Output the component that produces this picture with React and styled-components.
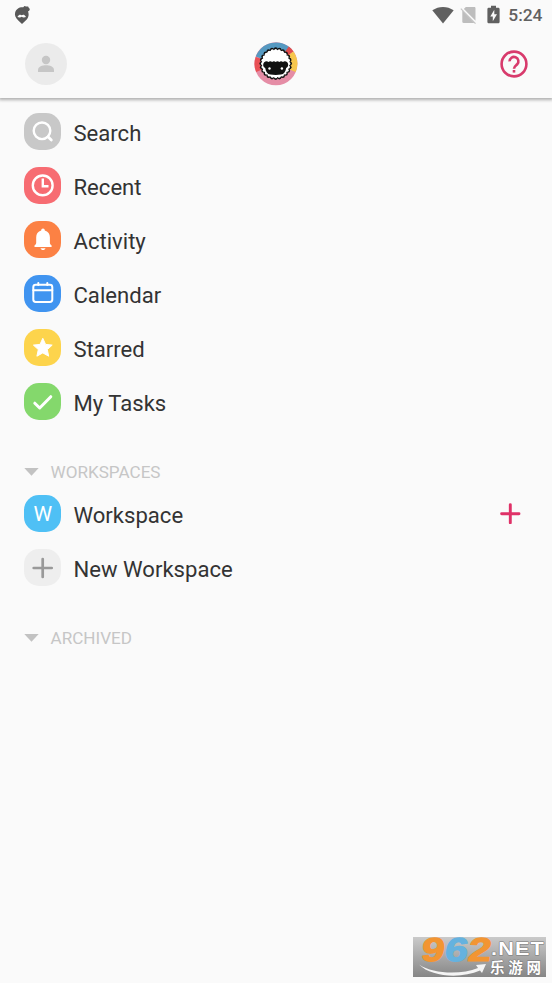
import React from "react";
import styled, { createGlobalStyle } from "styled-components";

const GlobalStyle = createGlobalStyle`
  * { box-sizing: border-box; }
  body { margin: 0; background: #fafafa; font-family: Roboto, "Noto Sans CJK SC", sans-serif; }
`;

const Screen = styled.div`
  position: relative;
  width: 552px;
  height: 983px;
  overflow: hidden;
  background: #fafafa;
  color: #333;
`;

const Top = styled.header`
  height: 98px;
  box-shadow: 0 1px 3px 1px rgba(0, 0, 0, 0.3);
`;

const StatusBar = styled.div`
  height: 30px;
  padding: 0 9.5px 0 13px;
  display: flex;
  justify-content: space-between;
  align-items: center;
`;

const StatusGroup = styled.div`
  display: flex;
  align-items: center;
`;

const StatusIcon = styled.svg`
  display: block;
  width: ${(p) => p.$w}px;
  height: 20px;
  margin-right: ${(p) => p.$gap || 0}px;
`;

const Clock = styled.span`
  font-size: 17.4px;
  line-height: 20px;
  font-weight: 500;
  color: #606060;
`;

const NavBar = styled.div`
  height: 68px;
  padding: 0 24px 0 25px;
  display: grid;
  grid-template-columns: 229px 44px 1fr;
  align-items: center;
`;

const Avatar = styled.div`
  width: 42px;
  height: 42px;
  border-radius: 50%;
  background: #ebebeb;
`;

const Glyph = styled.svg`
  display: block;
  width: ${(p) => p.$w}px;
  height: ${(p) => p.$h || p.$w}px;
`;

const HelpButton = styled.div`
  justify-self: end;
`;

const Menu = styled.main`
  padding: 6.5px 0 0 24px;
`;

const Row = styled.div`
  height: 54px;
  padding-right: 31px;
  display: flex;
  align-items: center;
`;

const Tile = styled.div`
  width: 37px;
  height: 37px;
  margin-left: 0.3px;
  border-radius: 15px;
  display: flex;
  align-items: center;
  justify-content: center;
  background: ${(p) => p.$color};
  color: #fff;
  font-size: ${(p) => (p.$letter ? 21 : 20)}px;
  line-height: 37px;
  padding-top: ${(p) => (p.$letter ? 2 : 0)}px;
`;

const Label = styled.span`
  flex: 1;
  margin-left: 12.2px;
  padding-top: 3px;
  font-size: 22.1px;
  line-height: 28px;
  color: #333;
`;

const SectionHead = styled.div`
  height: 29px;
  margin-top: 29px;
  display: flex;
  align-items: center;
`;

const SectionTitle = styled.span`
  margin-left: 11.5px;
  padding-bottom: 1px;
  font-size: 17.1px;
  line-height: 28px;
  color: #c6c6c6;
`;

const Watermark = styled.div`
  position: absolute;
  left: 413px;
  top: 923px;
`;

const line = { fill: "none", stroke: "#fff", strokeLinecap: "round", strokeLinejoin: "round" };

const icons = {
  search: (
    <g {...line} strokeWidth="2.4">
      <circle cx="18" cy="17.8" r="8.3" />
      <path d="M24 23.8L27.3 27" strokeWidth="2.8" />
    </g>
  ),
  recent: (
    <g {...line} strokeWidth="2.4" strokeLinecap="butt">
      <circle cx="18.7" cy="18.4" r="9.9" />
      <path d="M18.8 11.5V19.2H24.5" strokeLinejoin="miter" />
    </g>
  ),
  activity: (
    <g fill="#fff">
      <path d="M19 7.5c1.2 0 1.8.8 1.8 1.9 3.3.8 5.1 3.5 5.1 6.8v5.5c0 1.1.5 1.8 1.7 2.8v1.4H10.5v-1.4c1.2-1 1.7-1.7 1.7-2.8v-5.5c0-3.3 1.7-6 5-6.8 0-1.1.7-1.9 1.8-1.9z" />
      <path d="M16.5 27.2h5c-.4 1.2-1.2 1.8-2.5 1.8s-2.1-.6-2.5-1.8z" />
    </g>
  ),
  calendar: (
    <g {...line} strokeWidth="2">
      <rect x="9.3" y="9.8" width="19" height="17.2" rx="2.4" />
      <path d="M9.3 15.3H28.3M14.3 7.9V10M23.3 7.9V10" />
    </g>
  ),
  starred: (
    <path fill="#fff" stroke="#fff" strokeWidth="1" strokeLinejoin="round" d="M18.8 9.3l2.8 6.1 6.6.7-4.9 4.5 1.4 6.6-5.9-3.3-5.9 3.3 1.4-6.6-4.9-4.5 6.6-.7z" />
  ),
  tasks: <path {...line} strokeWidth="3" d="M10.8 20.2L15.7 25 26.8 13.7" />,
  add: <path {...line} stroke="#999" strokeWidth="2.7" d="M18.7 10V28M9.7 19H27.7" />,
};

const items = [
  ["search", "Search", "#c8c8c8"],
  ["recent", "Recent", "#f76c72"],
  ["activity", "Activity", "#fc8144"],
  ["calendar", "Calendar", "#4094f0"],
  ["starred", "Starred", "#fdd44c"],
  ["tasks", "My Tasks", "#84d86c"],
];

function MenuRow({ icon, letter, label, color, children }) {
  return (
    <Row>
      <Tile $color={color} $letter={!!letter}>
        {letter || <Glyph $w={37} viewBox="0 0 37 37">{icons[icon]}</Glyph>}
      </Tile>
      <Label>{label}</Label>
      {children}
    </Row>
  );
}

function Group({ title }) {
  return (
    <SectionHead>
      <Glyph $w={15} $h={8} viewBox="0 0 15 8"><path d="M.3 0H14.7L7.5 7.8z" fill="#c2c2c2" /></Glyph>
      <SectionTitle>{title}</SectionTitle>
    </SectionHead>
  );
}

const wool = Array.from({ length: 24 }, (_, i) => {
  const a = (i / 24) * Math.PI * 2;
  return [Math.cos(a), Math.sin(a)];
});

function SheepLogo() {
  return (
    <Glyph $w={44} viewBox="0 0 44 44">
      <circle cx="21.9" cy="21.8" r="21.5" fill="#e58da6" />
      <path d="M22 22L1.8 14.6A21.5 21.5 0 0 1 37.2 6.7z" fill="#5599c1" />
      <path d="M22 22L34.8 4.6A21.5 21.5 0 0 1 39.4 9.5z" fill="#df4c4d" />
      <path d="M22 22L39.4 9.5A21.5 21.5 0 0 1 41.7 30z" fill="#f6c64c" />
      <path d="M22 22L2.1 30A21.5 21.5 0 0 1 1.7 14.9z" fill="#e85055" />
      {wool.map(([x, y], i) => <circle key={i} cx={21.7 + x * 14.2} cy={21.6 + y * 14.2} r="2.1" fill="#101010" />)}
      <circle cx="21.7" cy="21.6" r="14.6" fill="#101010" />
      <circle cx="21.7" cy="21.6" r="13.7" fill="#fff" />
      {wool.map(([x, y], i) => <circle key={i} cx={21.7 + x * 13.2} cy={21.6 + y * 13.2} r="1.5" fill="#fff" />)}
      <path d="M10.2 20.3c1.4-1.5 3.3-1.2 4.2-.4 1.2-1 2.7-1 3.7 0 1.1-1 2.5-1 3.6 0 1.1-1 2.5-1 3.6 0 1-1 2.5-1 3.7 0 .9-.8 2.8-1.100 4.200.4 1.700 2.200 1.200 4.900-1 5.600-.6 3.700-2.200 6.200-5.200 6.700-3.300.5-7.300.5-10.600 0-3-.5-4.600-3-5.200-6.700-2.200-.7-2.700-3.400-1-5.600z" fill="#111" />
      <g fill="#fff"><circle cx="15.5" cy="26.5" r="1.2" /><circle cx="27.9" cy="26.5" r="1.2" /></g>
    </Glyph>
  );
}

export default function App() {
  return (
    <Screen>
      <GlobalStyle />
      <Top>
        <StatusBar>
          <StatusIcon $w={18} viewBox="0 0 18 20">
            <path fill="#585858" d="M10.3 2.3l1.1-1.4 1.7.6 2 .1.8 1.5 1 .9-.7 1.8-1.2.7c1.5 3.7.2 6.8-2.3 9L9 19 5.3 15.5C2.6 13 1.3 10.5 2.2 7.3 3.1 4.1 6.3 1.9 10.3 2.3z" />
            <path fill="#fafafa" d="M8.7 10.3c1.2-.9 2.9-.7 4.3 1.7-1.5.6-3.1.8-4.3-.2-1.2 1-2.800.8-4.300.2 1.400-2.400 3.100-2.600 4.300-1.700z" />
          </StatusIcon>
          <StatusGroup>
            <StatusIcon $w={22} $gap={6} viewBox="0 0 22 20">
              <path fill="#606060" d="M.3 5.3C6.8.8 15.2.8 21.7 5.3L11 18.5z" />
            </StatusIcon>
            <StatusIcon $w={17} $gap={10} viewBox="0 0 17 20">
              <path fill="#bdbdbd" d="M5.8 2h8.4c.8 0 1.3.5 1.3 1.3v12.500L3.800 4zM2.300 5.400L14.600 18H3.500c-.8 0-1.200-.5-1.200-1.200z" />
              <path d="M1 2.500L16.300 18" stroke="#fafafa" strokeWidth="1.500" />
              <path d="M.8 3.600L15.500 18.700" stroke="#c5c5c5" strokeWidth="1.200" />
            </StatusIcon>
            <StatusIcon $w={13} $gap={8} viewBox="0 0 13 20">
              <path fill="#606060" d="M4 .7h5v2h2c.8 0 1.600.5 1.600 1.300v13c0 .8-.8 1.300-1.600 1.300H2C1.200 18.300.4 17.800.4 17V4C.4 3.200 1.200 2.700 2 2.700h2z" />
              <path fill="#fafafa" d="M7.300 4.800L3.300 11.500h2.500v4.700L10 9.300H7.300z" />
            </StatusIcon>
            <Clock>5:24</Clock>
          </StatusGroup>
        </StatusBar>
        <NavBar>
          <Avatar>
            <Glyph $w={42} viewBox="0 0 42 42">
              <circle cx="21" cy="17" r="4.2" fill="#c6c6c6" />
              <path d="M13 29v-2c0-3.400 4.500-4.700 8-4.700s8 1.300 8 4.700v2z" fill="#c6c6c6" />
            </Glyph>
          </Avatar>
          <SheepLogo />
          <HelpButton>
            <Glyph $w={28} viewBox="0 0 28 28" fill="none" stroke="#d83a6c" strokeWidth="2.6">
              <circle cx="14" cy="14" r="12.4" />
              <path d="M9.600 11.400a4.400 4.400 0 1 1 7.600 2.900C15.600 15.800 14 16.500 14 18.700" />
              <path d="M12.700 21.300h2.600" />
            </Glyph>
          </HelpButton>
        </NavBar>
      </Top>
      <Menu>
        {items.map(([icon, label, color]) => (
          <MenuRow key={icon} icon={icon} label={label} color={color} />
        ))}
        <Group title="WORKSPACES" />
        <MenuRow letter="W" label="Workspace" color="#4fc0f5">
          <Glyph $w={21} viewBox="0 0 21 21">
            <path d="M10.300 1.600V19.800M1.600 10.700H19" stroke="#df3167" strokeWidth="2.900" strokeLinecap="round" />
          </Glyph>
        </MenuRow>
        <MenuRow icon="add" label="New Workspace" color="#eee" />
        <Group title="ARCHIVED" />
      </Menu>
      <Watermark>
        <Glyph $w={133} $h={54} viewBox="0 -10 133 54">
          <defs>
            <linearGradient id="plate" x1="0" y1="0" x2="0" y2="1">
              <stop offset="0" stopColor="#cacaca" />
              <stop offset="1" stopColor="#868686" />
            </linearGradient>
          </defs>
          <rect y="4" width="133" height="40" fill="url(#plate)" />
          <path d="M6 31.500C20 41 48 42 65 35l-2-3 10-1-4 9-2-2.500C48 46 18 44 6 31.500z" fill="#f4f4f4" />
          <g fontFamily="Liberation Sans, sans-serif" fontWeight="bold" strokeLinejoin="round">
            <g transform="translate(11 0) skewX(-8)" fontSize="33" strokeWidth="1.2">
              <text x="0" y="27.500" fill="#f29532" stroke="#f29532" textLength="23" lengthAdjust="spacingAndGlyphs">9</text>
              <text x="23.500" y="27.500" fill="#65b2df" stroke="#65b2df" textLength="23" lengthAdjust="spacingAndGlyphs">6</text>
              <text x="47" y="27.500" fill="#f29532" stroke="#f29532" textLength="23" lengthAdjust="spacingAndGlyphs">2</text>
            </g>
            <text x="78" y="22.300" fontSize="18" letterSpacing="1" paintOrder="stroke" strokeWidth="1" stroke="#777" fill="#fff" textLength="54" lengthAdjust="spacingAndGlyphs">.NET</text>
          </g>
          <text x="77" y="39.500" fontFamily="Noto Sans CJK SC, sans-serif" fontWeight="bold" fontSize="14.500" fill="#fff" stroke="#777" strokeWidth="1" paintOrder="stroke" textLength="51">乐游网</text>
        </Glyph>
      </Watermark>
    </Screen>
  );
}
